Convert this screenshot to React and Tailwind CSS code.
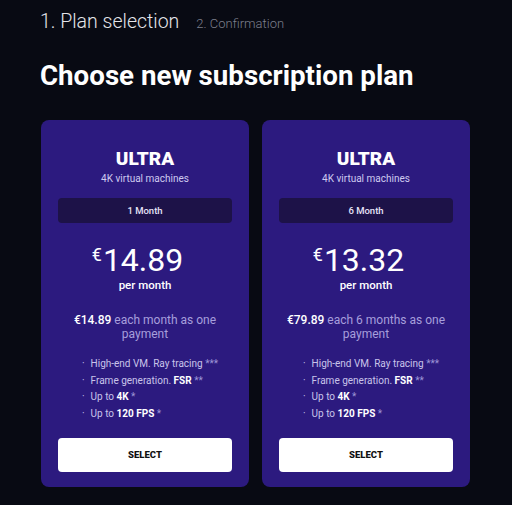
const plans = [
  { period: '1 Month', price: '14.89', total: '€14.89', desc: 'each month as one payment' },
  { period: '6 Month', price: '13.32', total: '€79.89', desc: 'each 6 months as one payment' },
];

function Features() {
  return (
    <ul className="mt-[17px] ml-[10px] flex flex-col gap-[4.5px] text-[10px] leading-[12px] text-[#c9c4ea] self-center">
      <li className="flex gap-[6px]"><span>·</span><span>High-end VM. Ray tracing <span className="text-[#9d95d6]">***</span></span></li>
      <li className="flex gap-[6px]"><span>·</span><span>Frame generation. <b className="font-bold text-white">FSR</b> <span className="text-[#9d95d6]">**</span></span></li>
      <li className="flex gap-[6px]"><span>·</span><span>Up to <b className="font-bold text-white">4K</b> <span className="text-[#9d95d6]">*</span></span></li>
      <li className="flex gap-[6px]"><span>·</span><span>Up to <b className="font-bold text-white">120 FPS</b> <span className="text-[#9d95d6]">*</span></span></li>
    </ul>
  );
}

function PlanCard({ plan }) {
  return (
    <div className="w-[208px] h-[367px] rounded-[8px] bg-[#2c1a7f] px-[17px] pt-[28px] flex flex-col items-center">
      <h3 className="text-[19px] leading-[22px] font-black text-white">ULTRA</h3>
      <p className="mt-[3px] text-[10px] leading-[12px] text-[#cfcaf0]">4K virtual machines</p>
      <div className="mt-[13px] w-full h-[25px] rounded-[4px] bg-[#1d1248] flex items-center justify-center text-[9.5px] font-medium text-[#e6e3f7]">
        {plan.period}
      </div>
      <div className="mt-[23px] mr-[15px] flex items-start text-white">
        <span className="text-[18px] leading-[18px] mr-[1px]">€</span>
        <span className="text-[32px] leading-[28px] font-normal">{plan.price}</span>
      </div>
      <p className="mt-[6px] text-[11.5px] leading-[11.5px] font-medium text-white">per month</p>
      <p className="mt-[22.5px] text-[12px] leading-[13.5px] text-center text-[#a79fdc]">
        <span className="text-white font-medium">{plan.total}</span> {plan.desc}
      </p>
      <Features />
      <button className="mt-[18px] w-full h-[34px] rounded-[4px] bg-white text-[#111] text-[9.5px] font-black">
        SELECT
      </button>
    </div>
  );
}

export default function App() {
  return (
    <div className="w-[512px] h-[505px] bg-[#080a13] font-['Roboto',sans-serif] pl-[40px] pt-[7px]">
      <div className="flex items-baseline gap-[17px]">
        <span className="text-[19.5px] font-light text-[#e4e5ea]">1. Plan selection</span>
        <span className="text-[13px] font-light text-[#7c7f8c]">2. Confirmation</span>
      </div>
      <h1 className="mt-[24px] text-[27.7px] leading-[32px] font-bold text-white">Choose new subscription plan</h1>
      <div className="mt-[28px] ml-[1px] flex gap-[13px]">
        {plans.map((p) => (
          <PlanCard key={p.period} plan={p} />
        ))}
      </div>
    </div>
  );
}
